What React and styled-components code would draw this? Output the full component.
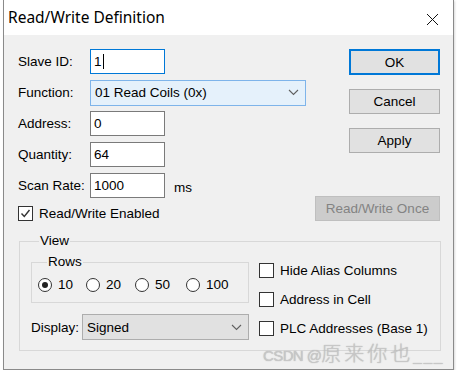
import React from "react";
import styled, { createGlobalStyle } from "styled-components";

const Global = createGlobalStyle`
  html, body {
    margin: 0;
    padding: 0;
    background: #ffffff;
  }
  body {
    font-family: "Liberation Sans", Arial, sans-serif;
    font-size: 13.5px;
    line-height: 15px;
    color: #000;
  }
`;

const Window = styled.div`
  position: relative;
  box-sizing: border-box;
  width: 451px;
  height: 370px;
  margin-left: 3px;
  border: 1px solid #8a8a8a;
  border-top: none;
  background: #f0f0f0;
  display: flex;
  flex-direction: column;
  box-shadow: 1px 1px 2px rgba(0, 0, 0, 0.15);
`;

const TitleBar = styled.div`
  height: 35px;
  flex: none;
  background: #ffffff;
  display: flex;
  align-items: center;
  justify-content: space-between;
  padding: 0 14px 0 4px;
`;

const Title = styled.div`
  font-family: "Noto Sans", "Open Sans", sans-serif;
  font-size: 15.5px;
  color: #000;
`;

const Close = styled.svg`
  width: 13px;
  height: 13px;
  margin-top: 3px;
`;

const Body = styled.div`
  padding: 14px 13px 0 14px;
  display: flex;
  flex-direction: column;
`;

const Top = styled.div`
  display: flex;
  justify-content: space-between;
`;

const FormCol = styled.div`
  display: flex;
  flex-direction: column;
  gap: 6px;
`;

const FieldRow = styled.div`
  display: flex;
  align-items: center;
  height: 25px;
`;

const Label = styled.div`
  width: ${(p) => p.$w || 72}px;
  flex: none;
  white-space: nowrap;
`;

const TextBox = styled.div`
  box-sizing: border-box;
  width: 75px;
  height: 25px;
  background: #fff;
  border: 1px solid ${(p) => (p.$focus ? "#0078d7" : "#7a7a7a")};
  padding: 0 3px;
  display: flex;
  align-items: center;
`;

const Caret = styled.span`
  display: inline-block;
  width: 1px;
  height: 15px;
  background: #000;
  margin-left: 1px;
`;

const Unit = styled.span`
  margin-left: 9px;
  margin-top: 4px;
`;

const Select = styled.div`
  box-sizing: border-box;
  width: ${(p) => p.$w}px;
  height: 26px;
  background: ${(p) => (p.$hover ? "#e5f1fb" : "#e1e1e1")};
  border: 1px solid ${(p) => (p.$hover ? "#7eb4ea" : "#adadad")};
  display: flex;
  align-items: center;
  justify-content: space-between;
  padding: 0 6px 0 4px;
  white-space: nowrap;
`;

const Chevron = () => (
  <svg width="11" height="7" viewBox="0 0 11 7">
    <polyline points="1,1 5.5,5.5 10,1" fill="none" stroke="#606060" strokeWidth="1.1" />
  </svg>
);

const CheckRow = styled.label`
  display: flex;
  align-items: center;
  gap: 6px;
  white-space: nowrap;
  margin-top: ${(p) => p.$mt || 0}px;
`;

const Box = styled.span`
  box-sizing: border-box;
  width: 15px;
  height: 15px;
  flex: none;
  background: #fff;
  border: 1px solid #333;
  display: flex;
  align-items: center;
  justify-content: center;
`;

const Check = ({ checked }) => (
  <Box>
    {checked && (
      <svg width="11" height="11" viewBox="0 0 11 11">
        <polyline points="1.5,5.5 4.3,8.5 9.5,2" fill="none" stroke="#333" strokeWidth="1.4" />
      </svg>
    )}
  </Box>
);

const ButtonCol = styled.div`
  display: flex;
  flex-direction: column;
  align-items: flex-end;
  gap: 14px;
`;

const Button = styled.div`
  box-sizing: border-box;
  width: ${(p) => p.$w || 91}px;
  height: ${(p) => (p.$default ? 26 : 25)}px;
  background: ${(p) => (p.$disabled ? "#cccccc" : "#e1e1e1")};
  border: ${(p) => (p.$default ? "2px solid #0078d7" : p.$disabled ? "1px solid #bfbfbf" : "1px solid #adadad")};
  color: ${(p) => (p.$disabled ? "#838383" : "#000")};
  display: flex;
  align-items: center;
  justify-content: center;
  white-space: nowrap;
  margin-top: ${(p) => p.$mt || 0}px;
`;

const Group = styled.fieldset`
  margin: ${(p) => p.$m || 0};
  padding: ${(p) => p.$p};
  border: 1px solid #d8d8d8;
  min-width: 0;
  box-sizing: border-box;
  width: ${(p) => p.$w}px;
`;

const Legend = styled.legend`
  padding: 0 1px;
  margin-left: ${(p) => p.$ml}px;
  line-height: 14px;
`;

const ViewInner = styled.div`
  display: flex;
  gap: 10px;
`;

const ViewLeft = styled.div`
  display: flex;
  flex-direction: column;
  gap: 11px;
`;

const RadioRow = styled.div`
  display: flex;
`;

const RadioItem = styled.label`
  display: flex;
  align-items: center;
  gap: 6px;
  width: ${(p) => p.$w}px;
`;

const Circle = styled.span`
  box-sizing: border-box;
  width: 14px;
  height: 14px;
  border-radius: 50%;
  border: 1px solid #333;
  background: #fff;
  display: flex;
  align-items: center;
  justify-content: center;
  &::after {
    content: "";
    width: 6px;
    height: 6px;
    border-radius: 50%;
    background: ${(p) => (p.$on ? "#222" : "transparent")};
  }
`;

const DisplayRow = styled.div`
  display: flex;
  align-items: center;
`;

const ViewRight = styled.div`
  display: flex;
  flex-direction: column;
  gap: 14px;
  padding-top: 8px;
`;

const Watermark = styled.div`
  position: absolute;
  left: 259px;
  top: 343px;
  display: flex;
  align-items: baseline;
  font-family: "Liberation Sans", "Noto Sans CJK SC", sans-serif;
  font-size: 15px;
  line-height: 20px;
  font-weight: 300;
  color: rgba(200, 200, 200, 0.95);
  text-shadow: 0 0 1px rgba(110, 110, 110, 0.5);
  white-space: pre;
`;

const Latin = styled.span`
  letter-spacing: ${(p) => p.$ls || 0}px;
`;

const Cjk = styled.span`
  font-family: "Noto Sans CJK SC", sans-serif;
  font-size: 20px;
  letter-spacing: 3px;
  font-weight: 300;
`;

const rows = [
  { v: "10", w: 48, on: true },
  { v: "20", w: 49 },
  { v: "50", w: 51 },
  { v: "100", w: 50 },
];

export default function App() {
  return (
    <>
      <Global />
      <Window>
        <TitleBar>
          <Title>Read/Write Definition</Title>
          <Close viewBox="0 0 13 13">
            <path d="M1 1 L12 12 M12 1 L1 12" stroke="#111" strokeWidth="1" />
          </Close>
        </TitleBar>
        <Body>
          <Top>
            <FormCol>
              <FieldRow>
                <Label>Slave ID:</Label>
                <TextBox $focus>
                  1<Caret />
                </TextBox>
              </FieldRow>
              <FieldRow>
                <Label>Function:</Label>
                <Select $w={216} $hover>
                  <span>01 Read Coils (0x)</span>
                  <Chevron />
                </Select>
              </FieldRow>
              <FieldRow>
                <Label>Address:</Label>
                <TextBox>0</TextBox>
              </FieldRow>
              <FieldRow>
                <Label>Quantity:</Label>
                <TextBox>64</TextBox>
              </FieldRow>
              <FieldRow>
                <Label>Scan Rate:</Label>
                <TextBox>1000</TextBox>
                <Unit>ms</Unit>
              </FieldRow>
              <CheckRow $mt={2}>
                <Check checked />
                Read/Write Enabled
              </CheckRow>
            </FormCol>
            <ButtonCol>
              <Button $default>OK</Button>
              <Button>Cancel</Button>
              <Button>Apply</Button>
              <Button $w={125} $disabled $mt={29}>
                Read/Write Once
              </Button>
            </ButtonCol>
          </Top>
          <Group $m="13px 0 0 1px" $p="7px 0 10px 11px" $w={422}>
            <Legend $ml={8}>View</Legend>
            <ViewInner>
              <ViewLeft>
                <Group $p="8px 0 10px 6px" $w={218}>
                  <Legend $ml={9}>Rows</Legend>
                  <RadioRow>
                    {rows.map((r) => (
                      <RadioItem key={r.v} $w={r.w}>
                        <Circle $on={r.on} />
                        {r.v}
                      </RadioItem>
                    ))}
                  </RadioRow>
                </Group>
                <DisplayRow>
                  <Label $w={51}>Display:</Label>
                  <Select $w={167}>
                    <span>Signed</span>
                    <Chevron />
                  </Select>
                </DisplayRow>
              </ViewLeft>
              <ViewRight>
                <CheckRow>
                  <Check />
                  Hide Alias Columns
                </CheckRow>
                <CheckRow>
                  <Check />
                  Address in Cell
                </CheckRow>
                <CheckRow>
                  <Check />
                  PLC Addresses (Base 1)
                </CheckRow>
              </ViewRight>
            </ViewInner>
          </Group>
        </Body>
        <Watermark>
          <Latin $ls={-0.6}>CSDN @</Latin>
          <Cjk>原来你也</Cjk>
          <Latin $ls={2}>___</Latin>
        </Watermark>
      </Window>
    </>
  );
}
